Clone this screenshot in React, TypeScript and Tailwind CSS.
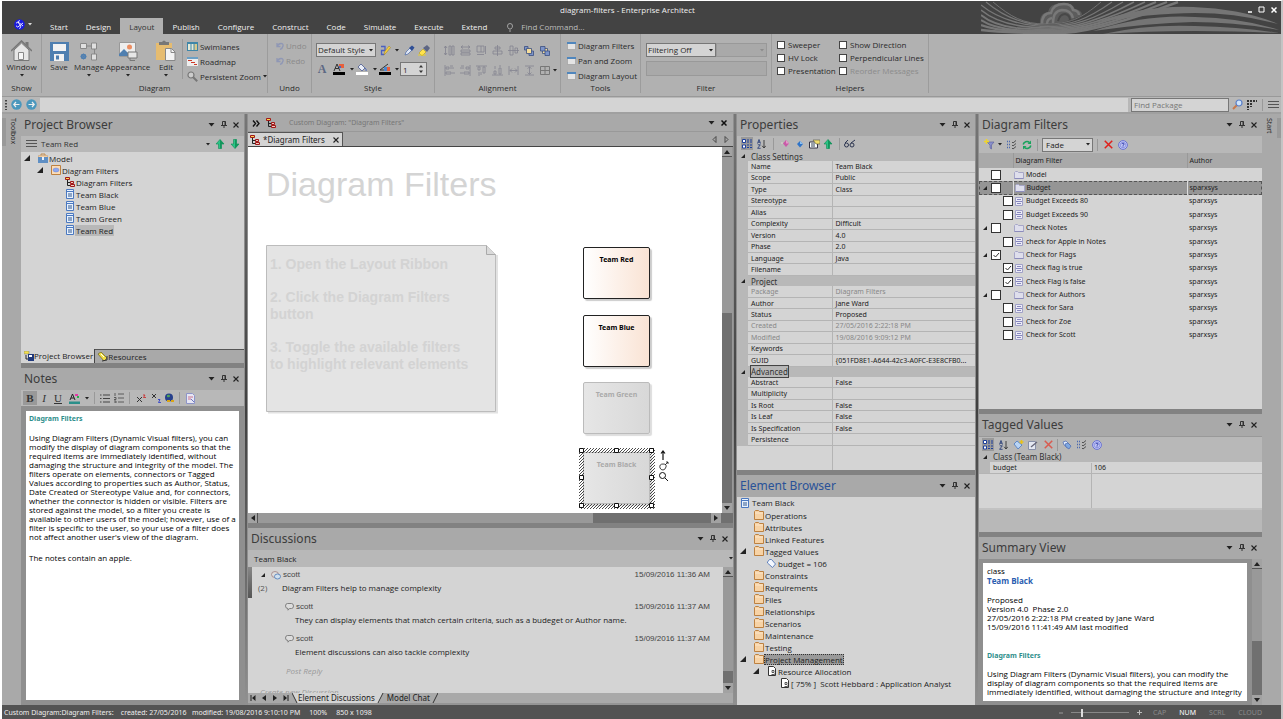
import React from "react";

type Kids = { children?: React.ReactNode };

/* ---------- small glyphs ---------- */

const Down = ({ c = "#222" }: { c?: string }) => (
  <svg width="4" height="3" viewBox="0 0 4 3" className="shrink-0"><path d="M0 0h4L2 2.500z" fill={c} /></svg>
);
const BigDown = () => (
  <svg width="7" height="4" viewBox="0 0 7 4"><path d="M.5 0h6l-3 3.500z" fill="#222" /></svg>
);
const Expand = ({ s = 5 }: { s?: number }) => (
  <svg width={s} height={s} viewBox="0 0 6 6" className="shrink-0"><path d="M6 0v6H0z" fill="#222" /></svg>
);
const Pin = () => (
  <svg width="6" height="8" viewBox="0 0 6 8" fill="none" stroke="#333"><path d="M1.500 .5h3v4h-3zM4 .5v4M0 4.500h6M3 5v2" /></svg>
);
const Cross = ({ s = 6, c = "#222", w = 1.1 }: { s?: number; c?: string; w?: number }) => (
  <svg width={s} height={s} viewBox="0 0 6 6" fill="none" stroke={c} strokeWidth={w}><path d="M.5 .5l5 5M5.500 .5l-5 5" /></svg>
);
const Tri = ({ d, c = "#222" }: { d: "u" | "d" | "l" | "r"; c?: string }) => {
  const p = { u: "M3 1l3 4H0z", d: "M0 1h6L3 5z", l: "M5 0v6L1 3z", r: "M1 0v6l4-3z" }[d];
  return <svg width="6" height="6" viewBox="0 0 6 6" className="shrink-0"><path d={p} fill={c} /></svg>;
};
const ArrowUpGreen = () => (
  <svg width="10" height="10" viewBox="0 0 10 10"><path d="M5 .5l4 4.500H6.500v4.500h-3V5H1z" fill="#2cc486" stroke="#0f8a54" strokeWidth=".6" /><path d="M5 .5l4 4.500H6.500v4.500H5z" fill="#12965c" /></svg>
);
const ArrowDownGreen = () => (
  <svg width="10" height="10" viewBox="0 0 10 10"><path d="M5 9.500L9 5H6.500V.5h-3V5H1z" fill="#2cc486" stroke="#0f8a54" strokeWidth=".6" /><path d="M5 9.500L9 5H6.500V.5H5z" fill="#12965c" /></svg>
);
const Menu = () => (
  <svg width="11" height="8" viewBox="0 0 11 8" stroke="#555"><path d="M0 .5h11M0 3.500h11M0 6.500h11" /></svg>
);
const DiagramIcon = () => (
  <svg width="10" height="10" viewBox="0 0 10 10" fill="none">
    <path d="M2.500 2v6.500H5M2.500 5.500H5" stroke="#222" />
    <path d="M.5 .5h4v2h-4z" fill="#ffd84a" stroke="#a01818" />
    <path d="M5.500 4.500h3v2h-3zM5.500 7.500h4v2h-4z" fill="#f3c9c0" stroke="#a01818" />
  </svg>
);
const ClassIcon = () => (
  <svg width="8" height="10" viewBox="0 0 8 10">
    <path d="M.5 .5h7v9h-7z" fill="#e8f2fd" stroke="#4a78c0" /><path d="M1 2.500h6" stroke="#4a78c0" />
    <path d="M2 5h4M2 7h4" stroke="#31568f" />
  </svg>
);
const Folder = () => (
  <svg width="10" height="10" viewBox="0 0 10 10"><path d="M.5 9.500v-8l1-1h3l1 1h4v8z" fill="#f7d3a6" stroke="#bd8140" /><path d="M1 3h8" stroke="#fbe6cb" /></svg>
);
const ModelIcon = () => (
  <svg width="10" height="10" viewBox="0 0 10 10"><path d="M3 2.500V1h4v1.500" stroke="#c08a4b" fill="none" /><path d="M.5 2.500h9v2h-9z" fill="#f3cda0" stroke="#c79a66" strokeWidth=".5" /><path d="M0 4h10v6H0z" fill="#5f8fc4" /><path d="M4 4h2v3H4z" fill="#e8f0fa" /></svg>
);
const PackageIcon = () => (
  <svg width="10" height="10" viewBox="0 0 10 10"><path d="M.5 .5h9v9h-9z" fill="#fbdcb8" stroke="#bd8140" /><ellipse cx="5" cy="5" rx="3" ry="2" fill="#8fa8ee" stroke="#6b87d8" strokeWidth=".5" /></svg>
);
const TagIcon = () => (
  <svg width="9" height="9" viewBox="0 0 9 9"><path d="M.5 3l2-2.500h2L8.500 5 5.500 8.500.5 4z" fill="#f4f8ff" stroke="#5478b8" strokeWidth=".9" /></svg>
);
const DocIcon = () => (
  <svg width="8" height="10" viewBox="0 0 8 10"><path d="M.5 .5h5l2 2v7h-7z" fill="#fff" stroke="#333" /><path d="M4 4.500h2v2H4zM3.500 8.500h3v-1" fill="none" stroke="#333" strokeWidth=".8" /></svg>
);
const LavFolder = () => (
  <svg width="10" height="8" viewBox="0 0 10 8"><path d="M.5 7.500v-6l1-1h2l1 1h5v6z" fill="#dedeec" stroke="#a6a6c8" /><path d="M.5 7.500h9" stroke="#8c8cbc" /></svg>
);
const FilterIcon = () => (
  <svg width="8" height="9" viewBox="0 0 8 9"><path d="M.5 .5h7v8h-7z" fill="#ececf6" stroke="#a0a0c8" /><path d="M2 2.500h4M2 6.500h4M1 4.500h6" stroke="#7c7cb8" strokeWidth=".9" /></svg>
);
const Categorized = () => (
  <svg width="10" height="10" viewBox="0 0 10 10" fill="none"><path d="M.5 .5h3v3h-3zM.5 6h3v3h-3z" fill="#fff" stroke="#1c3f9c" /><path d="M5 1h2M8 1h2M5 3h2M8 3h2M5 6h2M8 6h2M5 8.500h2M8 8.500h2" stroke="#1c3f9c" /></svg>
);
const SortAZ = () => (
  <svg width="9" height="10" viewBox="0 0 9 10" fill="none"><path d="M.5 4.500l1.500-4 1.500 4M1 3.200h2M.8 5.800h2.500l-2.700 3.500h3" stroke="#2a3f78" strokeWidth=".9" /><path d="M7 1v7.500M5.200 6.800L7 9l1.800-2.200" stroke="#333" strokeWidth=".9" /></svg>
);
const Help = () => (
  <svg width="10" height="10" viewBox="0 0 10 10" fill="none"><circle cx="5" cy="5" r="4.400" fill="#c4c9f6" stroke="#6a72d0" /><circle cx="5" cy="5" r="2.800" stroke="#7a82dc" strokeWidth=".7" /><path d="M3.900 4.200q0-1 1.100-1t1.100.9-1.100 1.100v.6M5 6.400v.8" stroke="#2f3aa8" strokeWidth=".9" /></svg>
);
const Checklist = () => (
  <svg width="10" height="10" viewBox="0 0 10 10" fill="none" stroke="#444"><path d="M0 1.500h3M0 4.500h3M0 7.500h3" stroke="#4a68b0" strokeWidth="1.500" strokeDasharray="1 1" /><path d="M5 2l1 1L9 .5M5 5l1 1 3-2.500M5 8l1 1 3-2.500" strokeWidth=".9" /></svg>
);
const Refresh = () => (
  <svg width="10" height="10" viewBox="0 0 10 10" fill="none" stroke="#18a35c" strokeWidth="1.600"><path d="M1.200 4.500A3.800 3.800 0 017.500 2.500M8.800 5.500A3.800 3.800 0 012.500 7.500" /><path d="M9 .5v3.500H5.500zM1 9.500V6h3.500z" fill="#18a35c" stroke="none" /></svg>
);
const RedX = ({ c = "#e0201b" }: { c?: string }) => <Cross s={9} c={c} w={1} />;

/* ---------- window chrome ---------- */

const IconBtn = ({ label, children, cls = "" }: Kids & { label: string; cls?: string }) => (
  <button aria-label={label} className={`flex h-3 shrink-0 items-center justify-center ${cls}`}>{children}</button>
);

function PanelHeader({ title, blue }: { title: string; blue?: boolean }) {
  return (
    <header className="flex h-[22px] shrink-0 items-center bg-[#a9a9a9] pl-[3px] pr-[2px]">
      <h2 className={`flex-1 font-['Noto_Sans',sans-serif] text-[12px] leading-5 ${blue ? "text-[#2a5298]" : "text-[#3c3c3c]"}`}>{title}</h2>
      <IconBtn label={`${title} menu`} cls="w-[13px]"><BigDown /></IconBtn>
      <IconBtn label={`Pin ${title}`} cls="w-3"><Pin /></IconBtn>
      <IconBtn label={`Close ${title}`} cls="w-3"><Cross /></IconBtn>
    </header>
  );
}

const HSplit = () => <div className="h-[5px] shrink-0 bg-[#828282]" />;
const VSplit = () => (
  <div className="flex w-1 shrink-0 justify-center bg-[#8f8f8f]">
    <div className="w-[2px] bg-linear-to-b from-[#777] via-[#404040] to-[#909090]" />
  </div>
);
const Sep = () => <div className="h-3 w-px shrink-0 bg-[#999]" />;

function VScroll({ thumb }: { thumb: string }) {
  return (
    <div className="flex w-[10px] shrink-0 flex-col bg-[#707070]">
      <IconBtn label="Scroll up" cls="h-[10px]! w-[10px] bg-[#a2a2a2] border-b border-[#555]"><Tri d="u" /></IconBtn>
      <div className={`bg-[#999] ${thumb}`} />
      <div className="flex-1" />
      <IconBtn label="Scroll down" cls="h-[10px]! w-[10px] bg-[#a2a2a2]"><Tri d="d" /></IconBtn>
    </div>
  );
}

function Check({ id, on }: { id: string; on?: boolean }) {
  return (
    <span className="relative inline-block h-[10px] w-[10px] shrink-0">
      <input id={id} aria-label={id} type="checkbox" defaultChecked={on} className="peer block h-[10px] w-[10px] appearance-none border border-[#333] bg-white" />
      <svg className="pointer-events-none absolute inset-0 hidden peer-checked:block" width="10" height="10" viewBox="0 0 10 10" fill="none" stroke="#333"><path d="M2.500 5l2 2 3.500-4" /></svg>
    </span>
  );
}

/* ---------- title bar ---------- */

const SWEEPS: [number, number][] = [[12, 1], [5, 1], [0, 4], [0, 9], [0, 14], [0, 19], [0, 24], [0, 29]];

function Waves() {
  return (
    <svg className="absolute right-0 top-0" width="300" height="33" viewBox="0 0 300 33" fill="none">
      <path d="M59 24q-1-12 8-13 1-8 13-9 11-1 14 6 6 1 7 5l-6 12z" fill="#5c5c5c" />
      <g stroke="#787878" strokeWidth="2.500">
        <path d="M61 23q0-11 9-11 2-9 13-9 8 0 9 6 6 1 6 5" />
        <path d="M72 22q0-12 9-13 9 0 11 8" />
        <path d="M66 23q0-5 5-6" />
      </g>
      <path d="M77 20q2-7 7-7 5 1 5 6" stroke="#484848" strokeWidth="2" />
      <path d="M12 1C30 20 48 23 65 23S100 18 120 1L300 33H0z" fill="#434343" />
      <g stroke="#777">
        {SWEEPS.map(([x, y], i) => (
          <path key={i} strokeWidth={0.9 + i * 0.22} d={`M${x} ${y}C${x + 18} ${Math.min(y + 15, 31)} ${42 + i * 2} ${23 + i * 1.4} ${65 + i * 2} ${23 + i * 1.3}S${100 + i * 6} ${18 + i * 0.5} ${120 + i * 11} 1`} />
        ))}
      </g>
      <path d="M112 33Q170 9 212 12 262 12 299 32v1z" fill="#434343" />
      <g fill="#757575">
        <path d="M112 22Q164 4 212 6 262 8 297 23 256 12 214 12 170 12 112 22z" />
        <path d="M112 30Q166 13 214 16 262 17 298 29 256 21 212 21 168 22 112 30z" />
        <path d="M122 33Q166 23 214 25 262 26 298 32q-40-2-84-2-50 0-92 3z" />
      </g>
    </svg>
  );
}

const TABS = ["Start", "Design", "Layout", "Publish", "Configure", "Construct", "Code", "Simulate", "Execute", "Extend"];

function TitleBar() {
  return (
    <header className="relative h-[33px] shrink-0 bg-[#434343] text-[#f0f0f0]">
      <Waves />
      <div className="relative flex h-[17px] items-center">
        <h1 className="flex-1 pr-7 text-center">diagram-filters - Enterprise Architect</h1>
        <div className="absolute right-1 flex gap-[5px]">
          <IconBtn label="Minimize" cls="w-[7px]"><svg width="6" height="7"><path d="M1 6h4" stroke="#fff" strokeWidth="1.500" /></svg></IconBtn>
          <IconBtn label="Maximize" cls="w-[7px]"><svg width="7" height="7"><path d="M1 1h5v5H1z" fill="none" stroke="#fff" /></svg></IconBtn>
          <IconBtn label="Close" cls="w-[7px]"><Cross c="#fff" w={1.5} /></IconBtn>
        </div>
      </div>
      <nav className="relative flex h-4 items-stretch">
        <button aria-label="Application menu" className="flex w-[39px] shrink-0 items-center gap-[3px] pb-[4px] pl-3">
          <svg width="11" height="11" viewBox="0 0 11 11" fill="none" className="shrink-0"><circle cx="5.500" cy="5.500" r="5.300" fill="#1a1ae0" /><path d="M2 4.200q2-2.400 3.500 0T9 4M2 6.800q1.500 2.400 3.500 0T9 7M5.500 1.200q-2.500 2 0 4.300t0 4.300" stroke="#fff" strokeWidth=".9" /></svg>
          <Down c="#ddd" />
        </button>
        {TABS.map((t) => (
          <button key={t} className={`px-[9px] pt-[2px] ${t === "Layout" ? "bg-[#b1b1b1] text-[#333]" : ""}`}>{t}</button>
        ))}
        <label className="ml-[11px] flex items-center gap-2 pt-[2px] text-[#ccc]">
          <svg width="6" height="9" viewBox="0 0 6 9" fill="none" stroke="#bbb" strokeWidth=".8"><path d="M2 6Q.5 4.500.5 3a2.500 2.500 0 015 0Q5.500 4.500 4 6zM2 8h2" /></svg>
          <input aria-label="Find Command" placeholder="Find Command..." className="w-24 bg-transparent placeholder:text-[#bdbdbd] outline-none" />
        </label>
      </nav>
    </header>
  );
}

/* ---------- ribbon ---------- */

function Group({ label, w, children }: Kids & { label: string; w: string }) {
  return (
    <section className={`flex shrink-0 flex-col border-r border-[#9c9c9c] ${w}`}>
      <div className="h-[49px]">{children}</div>
      <div className="text-center">{label}</div>
    </section>
  );
}

function BigBtn({ label, w, arrow = true, children }: Kids & { label: string; w: string; arrow?: boolean }) {
  return (
    <button className={`flex shrink-0 flex-col items-center ${w}`}>
      <span className="flex h-[22px] items-end">{children}</span>
      <span className="mt-px leading-[10px]">{label}</span>
      <span className="mt-[2px]">{arrow && <Down />}</span>
    </button>
  );
}

const WinGlyph = () => (
  <svg width="9" height="8" viewBox="0 0 9 8"><path d="M.5 .5h8v7h-8z" fill="#e4e4e4" stroke="#999" strokeWidth=".6" /><path d="M0 0h9v2H0z" fill="#4f86bd" /></svg>
);

const ALIGN: string[] = [
  "M1.500 1v9M0 3l1.500-2L3 3M0 8l1.500 2L3 8M5 1h2v9H5zM8 1h2v9H8z",
  "M1 2h9M3 .5L1 2l2 1.500M8 .5L10 2 8 3.500M1 5h9v2H1zM1 8h9v2H1z",
  "M1 1h7v6H1zM5 1v6M9.500 1v8M1 9.500h7",
  "M5.500 0v11M3 2h5v2H3zM1 6h9v3H1z",
  "M0 5.500h11M2 1h3v9H2zM7 3h2.500v5H7z",
];
const ALIGN2: string[] = [
  "M1 0v11M2 2h3v2H2zM6 1h3M6 3h4M2 7h5v2H2zM8 8h3",
  "M10 0v11M6 2h3v2H6zM1 1h3M0 3h4M4 7h5v2H4zM0 8h3",
  "M0 1h11M2 2h2v3H2zM7 2h2v6H7zM3 7v4M5 7v3",
  "M0 10h11M2 6h2v3H2zM7 3h2v6H7zM3 1v3M8 0v2",
  "M1 1v9M10 1v9M2 5.500h7M4 3.500L2 5.500l2 2M7 3.500l2 2-2 2",
  "M1 1h9M1 10h9M5.500 2v7M3.500 3.500L5.500 2l2 1.500M3.500 7.500l2 2 2-2",
];

function AlignIcon({ d }: { d: string }) {
  return (
    <button aria-label="Align" className="flex w-4 justify-center">
      <svg width="11" height="11" viewBox="0 0 11 11" fill="none" stroke="#83838f" strokeWidth=".8"><path d={d} /></svg>
    </button>
  );
}

function Sel({ label, value, w, cls = "" }: { label: string; value: string; w: string; cls?: string }) {
  return (
    <span className={`relative inline-flex items-center ${w}`}>
      <select aria-label={label} className={`h-[14px] w-full appearance-none border px-px leading-3 ${cls || "border-[#777] bg-[#d4d4d4]"}`}><option>{value}</option></select>
      <span className="pointer-events-none absolute right-[3px]"><Down c={value ? "#222" : "#8c8c8c"} /></span>
    </span>
  );
}

function HelperCheck({ label, off }: { label: string; off?: boolean }) {
  return (
    <div className="flex h-[13px] items-center gap-[3px]">
      <span className="relative inline-block h-2 w-2 shrink-0">
        <input id={label} type="checkbox" disabled={off} className="block h-2 w-2 appearance-none border border-[#444] bg-white" />
      </span>
      <label htmlFor={label} className={off ? "whitespace-nowrap text-[#8c8c8c]" : "whitespace-nowrap"}>{label}</label>
    </div>
  );
}

function Ribbon() {
  return (
    <div className="flex h-[63px] shrink-0 border-b border-[#999] bg-[#b1b1b1] pb-[3px] text-[#2a2a2a]">
      <Group label="Show" w="w-10">
        <div className="flex justify-center pt-[5px]">
          <BigBtn label="Window" w="w-9">
            <svg width="21" height="21" viewBox="0 0 21 21"><path d="M3 10v10.500h15V10L10.500 3z" fill="#e6e6e6" stroke="#777" /><path d="M14.500 2h3v5l-3-3z" fill="#777" /><path d="M0 11L10.500 1 21 11" fill="none" stroke="#777" strokeWidth="1.600" /><path d="M7.500 12.500h5v7h-5z" fill="#f6f6f6" stroke="#888" /></svg>
          </BigBtn>
        </div>
      </Group>
      <Group label="Diagram" w="w-[226px]">
        <div className="flex pl-[2px] pt-[5px]">
          <BigBtn label="Save" w="w-[30px]" arrow={false}>
            <svg width="19" height="20" viewBox="0 0 19 20"><path d="M0 1h19v19H0z" fill="#4f7fb0" /><path d="M3 3h13v7H3zM4 13h10v7H4z" fill="#f2f2f2" /><path d="M6 14.500h3v4H6z" fill="#4f7fb0" /></svg>
          </BigBtn>
          <BigBtn label="Manage" w="w-[30px]">
            <svg width="18" height="20" viewBox="0 0 18 20" fill="none"><path d="M.5 2.500h6v5h-6zM11.500 2h5v6h-5zM11.500 13h5v6h-5z" fill="#e0e0e0" stroke="#888" /><path d="M6.500 5h5M14.500 8v5" stroke="#888" /><circle cx="3.500" cy="15.500" r="2" stroke="#4f7fb0" strokeWidth="1.600" /><path d="M3.500 12.500v6M.5 15.500h6M1.500 13.500l4 4M5.500 13.500l-4 4" stroke="#4f7fb0" strokeWidth=".8" /></svg>
          </BigBtn>
          <BigBtn label="Appearance" w="w-[48px]">
            <svg width="20" height="20" viewBox="0 0 20 20"><path d="M1.500 1.500h16v14h-16z" fill="#eee" stroke="#999" /><circle cx="11.500" cy="6" r="2.500" fill="#ec8e62" /><path d="M1 13l5-5 4 4v3H1z" fill="#4f7fb0" /><path d="M10 11h9v6h-9z" fill="#e6e6e6" stroke="#777" /><path d="M12 17v2.500h5" stroke="#777" fill="none" /></svg>
          </BigBtn>
          <BigBtn label="Edit" w="w-[28px]">
            <svg width="20" height="21" viewBox="0 0 20 21"><path d="M0 3h16v17H0z" fill="#e6bc70" /><path d="M3 2h3q2-3 4 0h3v3H3z" fill="#777" /><path d="M9.500 8.500h6l3.500 3.500v8.500h-9.500z" fill="#f4f4f4" stroke="#888" /><path d="M15 8.500v4h4" fill="none" stroke="#888" /></svg>
          </BigBtn>
          <div className="mx-[2px] h-10 w-px bg-[#999]" />
          <div className="flex flex-col whitespace-nowrap pl-[2px]">
            <button className="flex h-[15px] items-center gap-[2px]"><svg width="11" height="9" viewBox="0 0 11 9"><path d="M0 0h11v9H0z" fill="#3f86a8" /><path d="M1 2h2.500v6H1zM4.500 2h2v6h-2z" fill="#e6ead8" /><path d="M7.500 2h2.500v6H7.500z" fill="#d8c98c" /></svg>Swimlanes</button>
            <button className="flex h-[15px] items-center gap-[2px]"><svg width="11" height="9" viewBox="0 0 11 9"><path d="M0 0h11v9H0z" fill="#eee" /><path d="M0 1h11" stroke="#3f86b8" strokeWidth="1.500" /><path d="M1 3.500h4M4 5.500h4M7 7.500h3" stroke="#cf3c2b" /></svg>Roadmap</button>
            <button className="flex h-[15px] items-center gap-[2px]"><svg width="11" height="11" viewBox="0 0 11 11" fill="none" stroke="#777"><circle cx="4" cy="4" r="3" fill="#ccc" strokeWidth="1.200" /><path d="M6.200 6.200l4 4" strokeWidth="2" /></svg>Persistent Zoom<Down /></button>
          </div>
        </div>
      </Group>
      <Group label="Undo" w="w-11">
        <div className="flex flex-col pl-2 pt-1 text-[#8a8a8a]">
          <button className="flex h-[15px] items-center gap-[2px]"><svg width="8" height="8" viewBox="0 0 8 8" fill="none" stroke="#8f97b5" strokeWidth="1.300"><path d="M1 1v3.500h3.500M1 4.500q1.500-3 4-3T7 4 4 7.500" /></svg>Undo</button>
          <button className="flex h-[15px] items-center gap-[2px]"><svg width="8" height="8" viewBox="0 0 8 8" fill="none" stroke="#8f97b5" strokeWidth="1.300"><path d="M1 1v3.500h3.500M1 4.500q1.500-3 4-3T7 4 4 7.500" /></svg>Redo</button>
        </div>
      </Group>
      <Group label="Style" w="w-[123px]">
        <div className="flex items-center pl-1 pt-[9px]">
          <Sel label="Style" value="Default Style" w="w-[60px]" />
          <IconBtn label="Save style" cls="ml-1 w-[11px]"><svg width="11" height="11" viewBox="0 0 11 11"><path d="M1 1.500h4v4H1.500v4H4" fill="none" stroke="#4a5fc0" strokeWidth="1.300" /><path d="M4 10l1-4 4-5 1.500 1.500-4 5z" fill="#f5cf3e" stroke="#9a7a20" strokeWidth=".5" /></svg></IconBtn>
          <span className="mx-1"><Down /></span>
          <IconBtn label="Pick style" cls="w-3"><svg width="11" height="11" viewBox="0 0 11 11"><path d="M1 10l1-3 4-4 2 2-4 4z" fill="#dfe7f7" stroke="#4a68a8" strokeWidth=".7" /><path d="M5 3l3-2.500 2.500 2L8 6z" fill="#2f4f96" /></svg></IconBtn>
          <IconBtn label="Apply style" cls="ml-[3px] w-3"><svg width="12" height="11" viewBox="0 0 12 11"><path d="M1 8l4-4 3 3-4 4z" fill="#ffe34d" stroke="#b49a22" strokeWidth=".6" /><path d="M5 3l4-3 3 3-3 4z" fill="#5d6684" /><path d="M0 10h8" stroke="#e8cf2c" /></svg></IconBtn>
        </div>
        <div className="flex items-center pl-1 pt-[5px]">
          <IconBtn label="Font" cls="w-3"><span className="font-['Liberation_Serif',serif] text-[12px] font-bold leading-3 text-[#5d6884]">A</span></IconBtn>
          <IconBtn label="Text colour" cls="ml-[5px] w-3"><svg width="12" height="12" viewBox="0 0 12 12"><path d="M1 8l3-7 3 7M2 5.500h4" stroke="#333" fill="none" /><path d="M6 1h5v4H6z" fill="#e8603c" /><path d="M6 3h2v2H6z" fill="#4a68c0" /><path d="M0 9h12v3H0z" fill="#000" /></svg></IconBtn>
          <span className="ml-[5px]"><Down /></span>
          <IconBtn label="Fill colour" cls="ml-[2px] w-3"><svg width="12" height="12" viewBox="0 0 12 12"><path d="M2 4l3-3 4 4-3 3z" fill="#e9edf7" stroke="#4a5a90" strokeWidth=".8" /><path d="M9 5q2 2 1 3" stroke="#4a68c0" fill="none" /><path d="M0 9h12v3H0z" fill="#fff" /></svg></IconBtn>
          <span className="ml-[5px]"><Down /></span>
          <IconBtn label="Line colour" cls="ml-[2px] w-3"><svg width="12" height="12" viewBox="0 0 12 12"><path d="M1 7l8-6M1 7h4" stroke="#333" /><path d="M5 4h3v4H5z" fill="#4a88d0" /><path d="M8 4h3v4H8z" fill="#e8603c" /><path d="M0 9h12v3H0z" fill="#000" /></svg></IconBtn>
          <span className="ml-1"><Down /></span>
          <span className="relative ml-px flex items-center">
            <input aria-label="Line width" defaultValue="1" className="h-[14px] w-[27px] border border-[#777] bg-[#d4d4d4] px-[2px] outline-none" />
            <span className="pointer-events-none absolute right-1 flex flex-col gap-[2px]"><svg width="4" height="3"><path d="M2 0l2 2.500H0z" fill="#333" /></svg><svg width="4" height="3"><path d="M2 3L4 .5H0z" fill="#333" /></svg></span>
          </span>
        </div>
      </Group>
      <Group label="Alignment" w="w-[126px]">
        <div className="flex pl-[6px] pt-[11px]">
          {ALIGN.map((d) => <AlignIcon key={d} d={d} />)}
          <IconBtn label="Bring to front" cls="w-4"><svg width="10" height="10" viewBox="0 0 10 10" stroke="#3b4f80" strokeWidth=".8"><path d="M5 5h4.500v4.500H5z" fill="#7d94c8" /><path d="M.5 .5H4V4H.5z" fill="#7d94c8" /><path d="M2.500 2.500h5v5h-5z" fill="#f6dd9a" /></svg></IconBtn>
          <IconBtn label="Send to back" cls="w-4"><svg width="10" height="10" viewBox="0 0 10 10" stroke="#3b4f80" strokeWidth=".8"><path d="M2.500 2.500h5v5h-5z" fill="#f6dd9a" /><path d="M5 5h4.500v4.500H5zM.5 .5H5V5H.5z" fill="#7d94c8" /></svg></IconBtn>
        </div>
        <div className="flex items-center pl-[6px] pt-[7px]">
          {ALIGN2.map((d) => <AlignIcon key={d} d={d} />)}
          <IconBtn label="Auto layout" cls="w-4"><svg width="10" height="9" viewBox="0 0 10 9" fill="none" stroke="#777"><path d="M.5 .5h9v8h-9zM5 .5v8M.5 4.500h9" /></svg></IconBtn>
          <Down />
        </div>
      </Group>
      <Group label="Tools" w="w-20">
        <div className="flex flex-col pl-[6px] pt-1">
          {["Diagram Filters", "Pan and Zoom", "Diagram Layout"].map((t) => (
            <button key={t} className="flex h-[15px] items-center gap-[2px] whitespace-nowrap"><WinGlyph />{t}</button>
          ))}
        </div>
      </Group>
      <Group label="Filter" w="w-[131px]">
        <div className="flex pl-[5px] pt-[9px]">
          <Sel label="Filtering" value="Filtering Off" w="w-[70px]" />
          <Sel label="Filter value" value="" w="w-[51px]" cls="border-[#999] bg-[#a9a9a9]" />
        </div>
        <div className="pl-[5px] pt-1"><input aria-label="Filter text" disabled className="block h-[15px] w-[121px] border border-[#999] bg-[#a9a9a9]" /></div>
      </Group>
      <Group label="Helpers" w="w-[157px]">
        <div className="grid grid-cols-[62px_auto] pl-[5px] pt-1">
          <HelperCheck label="Sweeper" /><HelperCheck label="Show Direction" />
          <HelperCheck label="HV Lock" /><HelperCheck label="Perpendicular Lines" />
          <HelperCheck label="Presentation" /><HelperCheck label="Reorder Messages" off />
        </div>
      </Group>
    </div>
  );
}

const NavCircle = ({ flip }: { flip?: boolean }) => (
  <svg width="11" height="11" viewBox="0 0 11 11" className={flip ? "rotate-180" : ""}><circle cx="5.500" cy="5.500" r="5.200" fill="#4a97bd" /><path d="M8.500 5.500H3M5 3L2.800 5.500 5 8" stroke="#eee" strokeWidth="1.200" fill="none" /></svg>
);

function AddressBar() {
  return (
    <div className="flex h-[17px] shrink-0 items-center border-b-2 border-[#a0a0a0] bg-[#b8b8b8]">
      <svg width="8" height="10" className="pl-[3px]"><path d="M1 0v10" stroke="#444" strokeWidth="2" strokeDasharray="1.500 1.500" /></svg>
      <IconBtn label="Back" cls="w-[13px]"><NavCircle /></IconBtn>
      <IconBtn label="Forward" cls="ml-[2px] w-[13px]"><NavCircle flip /></IconBtn>
      <div className="ml-[2px] h-[14px] flex-1 bg-[#d4d4d4]" />
      <input aria-label="Find Package" placeholder="Find Package" className="ml-[3px] h-[14px] w-[98px] border border-[#777] bg-[#d4d4d4] px-[2px] outline-none placeholder:text-[#777]" />
      <IconBtn label="Search" cls="ml-[2px] w-3"><svg width="11" height="11" viewBox="0 0 11 11"><path d="M5 6L1 10" stroke="#c9784a" strokeWidth="2" /><circle cx="7" cy="4" r="3" fill="#cfe4fb" stroke="#5a7fc8" strokeWidth="1.200" /></svg></IconBtn>
      <IconBtn label="Options" cls="ml-[3px] w-3"><svg width="10" height="10" viewBox="0 0 10 10" stroke="#333" strokeWidth="2"><path d="M0 1h10" strokeDasharray="2 1" /><path d="M1 3v7M4 3v4" strokeDasharray="2 1" /></svg></IconBtn>
      <span className="mx-[4px]"><Sep /></span>
      <IconBtn label="Menu" cls="mr-[2px] w-3"><Menu /></IconBtn>
    </div>
  );
}

/* ---------- left column ---------- */

function TreeRow({ icon, text, pad, open, sel }: { icon: React.ReactNode; text: string; pad: string; open?: boolean; sel?: string }) {
  return (
    <li className={`flex h-3 items-center ${pad}`}>
      <span className="mr-[6px] w-[7px]">{open && <Expand s={6} />}</span>
      <span className="flex w-[11px] justify-center">{icon}</span>
      <span className={`whitespace-nowrap px-px leading-[11px] ${sel ?? ""}`}>{text}</span>
    </li>
  );
}

function ProjectBrowser() {
  return (
    <>
      <PanelHeader title="Project Browser" />
      <div className="flex h-4 shrink-0 items-center bg-[#b8b8b8] pl-[5px] pr-1">
        <Menu /><span className="ml-1 flex-1 text-[#333]">Team Red</span><Down />
        <IconBtn label="Move up" cls="ml-[5px] w-[10px]"><ArrowUpGreen /></IconBtn>
        <IconBtn label="Move down" cls="ml-[5px] w-[10px]"><ArrowDownGreen /></IconBtn>
      </div>
      <ul className="h-[197px] shrink-0 bg-[#d4d4d4]">
        <TreeRow icon={<ModelIcon />} text="Model" pad="pl-[3px]" open />
        <TreeRow icon={<PackageIcon />} text="Diagram Filters" pad="pl-4" open />
        <TreeRow icon={<DiagramIcon />} text="Diagram Filters" pad="pl-[30px]" />
        {["Team Black", "Team Blue", "Team Green"].map((t) => <TreeRow key={t} icon={<ClassIcon />} text={t} pad="pl-[30px]" />)}
        <TreeRow icon={<ClassIcon />} text="Team Red" pad="pl-[30px]" sel="bg-[#b8b8b8]" />
      </ul>
      <div className="flex h-[14px] shrink-0 border-t border-[#555] bg-[#a9a9a9] text-[#222]">
        <button className="-mt-px flex items-center border-r border-[#444] bg-[#d4d4d4] pl-[3px] pr-px">
          <svg width="10" height="10" viewBox="0 0 10 10"><path d="M0 0h5v3H0z" fill="#f5e14a" stroke="#777" strokeWidth=".5" /><path d="M2 4v4h2" stroke="#222" fill="none" /><path d="M4 3h6v7H4z" fill="#223a7c" /><path d="M5 4h3v2H5z" fill="#fff" /></svg>Project Browser
        </button>
        <button className="flex items-center pl-[2px]">
          <svg width="11" height="10" viewBox="0 0 11 10"><path d="M1 2l3-2 6 6-3 3z" fill="#f3df45" stroke="#6b611a" strokeWidth=".7" /><path d="M5 9l5-1V4" stroke="#333" fill="none" /><path d="M4 2l3 3" stroke="#fff" /></svg>Resources
        </button>
      </div>
    </>
  );
}

function Notes() {
  return (
    <>
      <PanelHeader title="Notes" />
      <div className="flex h-4 shrink-0 items-center bg-[#b8b8b8] pl-[2px] text-[#333]">
        <IconBtn label="Bold" cls="h-[14px]! w-[14px] bg-[#999]"><b className="font-['Liberation_Serif',serif] text-[11px]">B</b></IconBtn>
        <IconBtn label="Italic" cls="w-[14px]"><i className="font-['Liberation_Serif',serif] text-[11px]">I</i></IconBtn>
        <IconBtn label="Underline" cls="w-[14px]"><u className="font-['Liberation_Serif',serif] text-[11px]">U</u></IconBtn>
        <IconBtn label="Text colour" cls="ml-[3px] w-3"><svg width="11" height="11" viewBox="0 0 11 11"><path d="M1 7l2.500-6L6 7M2 5h3" stroke="#222" fill="none" /><path d="M6 1h3v2H6z" fill="#e33aa8" /><path d="M8 3h2v2H8z" fill="#27b04a" /><path d="M0 8.500h11V11H0z" fill="#2a8f8a" /></svg></IconBtn>
        <span className="mx-[5px]"><Down /></span><Sep />
        <IconBtn label="Bullets" cls="ml-1 w-3"><svg width="10" height="9" stroke="#444"><path d="M3 1h7M3 4.500h7M3 8h7" /><path d="M0 1h1.500M0 4.500h1.500M0 8h1.500" /></svg></IconBtn>
        <IconBtn label="Numbering" cls="ml-[2px] w-3"><svg width="10" height="10" stroke="#444" fill="none"><path d="M4 1h6M4 5h6M4 9h6M1 0v3M0 4.500h2v2H0M0 8h2v2H0" strokeWidth=".8" /></svg></IconBtn>
        <span className="ml-1"><Sep /></span>
        <IconBtn label="Superscript" cls="ml-[5px] w-3"><svg width="9" height="9" fill="none"><path d="M0 3l5 5M5 3L0 8" stroke="#333" /><path d="M6 1h2L6.500 3.500H9" stroke="#c22" strokeWidth=".8" /></svg></IconBtn>
        <IconBtn label="Subscript" cls="ml-[3px] w-3"><svg width="9" height="9" fill="none"><path d="M0 0l4 4M4 0L0 4" stroke="#333" /><path d="M6 5.500h2L6.500 8.500H9" stroke="#23c" strokeWidth=".8" /></svg></IconBtn>
        <IconBtn label="Hyperlink" cls="ml-px w-3"><svg width="11" height="11" viewBox="0 0 11 11"><circle cx="5" cy="4.500" r="4" fill="#27408c" /><path d="M3 2q3-1 3 1t-3 1z" fill="#4fa35a" /><path d="M3 8h3m1 0h3" stroke="#d9a514" strokeWidth="2" /></svg></IconBtn>
        <span className="mx-1"><Sep /></span>
        <IconBtn label="Insert" cls="w-3"><svg width="9" height="11" viewBox="0 0 9 11"><path d="M.5 .5h6l2 2v8h-8z" fill="#e6e6f4" stroke="#8d94c8" /><path d="M2 4h5M2 6h3" stroke="#c9748e" /><path d="M5 6l3 3" stroke="#6a78c0" /></svg></IconBtn>
      </div>
      <div className="min-h-0 flex-1 bg-[#8f8f8f] p-[5px]">
        <article className="h-full overflow-hidden whitespace-nowrap bg-white pl-[3px] pt-[3px] leading-[9px] text-black">
          <h3 className="font-['Noto_Sans',sans-serif] text-[7px] font-bold text-[#2f8f8c]">Diagram Filters</h3>
          <p className="mt-[10px]">Using Diagram Filters (Dynamic Visual filters), you can<br />modify the display of diagram components so that the<br />required items are immediately identified, without<br />damaging the structure and integrity of the model. The<br />filters operate on elements, connectors or Tagged<br />Values according to properties such as Author, Status,<br />Date Created or Stereotype Value and, for connectors,<br />whether the connector is hidden or visible. Filters are<br />stored against the model, so a filter you create is<br />available to other users of the model; however, use of a<br />filter is specific to the user, so your use of a filter does<br />not affect another user's view of the diagram.</p>
          <p className="mt-[12px]">The notes contain an apple.</p>
        </article>
      </div>
    </>
  );
}

/* ---------- centre ---------- */

function Box({ label, pos, faded }: { label: string; pos: string; faded?: boolean }) {
  return (
    <div className={`absolute h-[52px] w-[67px] rounded-[2px] border pt-[7px] text-center font-bold ${pos} ${faded ? "border-[#bbb] bg-linear-to-r from-[#e6e6e6] to-[#d8d8d8] text-[#aaa] shadow-[2px_2px_1px_#ddd]" : "border-[#222] bg-linear-to-r from-white to-[#f9e3d4] text-black shadow-[2px_2px_1px_#ccc]"}`}>
      {label}
    </div>
  );
}

const HANDLES: [number, number][] = [[0, 0], [35, 0], [70, 0], [0, 27], [70, 27], [0, 55], [35, 55], [70, 55]];

function Canvas() {
  return (
    <div className="relative min-w-0 flex-1 overflow-hidden bg-white font-['Noto_Sans',sans-serif] text-[7px]">
      <h2 className="absolute left-[18px] top-[17px] whitespace-nowrap font-['Liberation_Sans',sans-serif] text-[34px] leading-[40px] text-[#d4d4d4]">Diagram Filters</h2>
      <div className="absolute left-[18px] top-[98px] h-[167px] w-[230px]">
        <svg width="232" height="169" viewBox="0 0 232 169" className="absolute inset-0"><path d="M2 167.500h229V10" stroke="#e2e2e2" strokeWidth="2" fill="none" /><path d="M.5 .5h220l9 9v157H.5z" fill="#e4e4e4" stroke="#bcbcbc" /><path d="M220.500 .5v9h9" fill="#dadada" stroke="#aaa" /></svg>
        <div className="relative whitespace-nowrap pl-[4px] pt-[11px] font-['Liberation_Sans',sans-serif] text-[14px] font-bold leading-[17px] text-[#d3d3d3]">
          <p>1. Open the Layout Ribbon</p>
          <p className="mt-4">2. Click the Diagram Filters<br />button</p>
          <p className="mt-4">3. Toggle the available filters<br />to highlight relevant elements</p>
        </div>
      </div>
      <Box label="Team Red" pos="left-[335px] top-[100px]" />
      <Box label="Team Blue" pos="left-[335px] top-[168px]" />
      <Box label="Team Green" pos="left-[335px] top-[235px]" faded />
      <Box label="Team Black" pos="left-[335px] top-[305px]" faded />
      <svg className="absolute left-[331px] top-[301px]" width="76" height="61" viewBox="0 0 76 61">
        <defs><pattern id="hatch" width="3" height="3" patternUnits="userSpaceOnUse"><path d="M0 3L3 0M-1 1L1-1M2 4L4 2" stroke="#111" strokeWidth=".75" /></pattern></defs>
        <path fillRule="evenodd" d="M0 0h76v61H0zM5 5v51h66V5z" fill="url(#hatch)" />
        {HANDLES.map(([x, y]) => <path key={`${x}-${y}`} d={`M${x + 0.5} ${y + 0.5}h4v4h-4z`} fill="#fff" stroke="#111" />)}
      </svg>
      <svg className="absolute left-[410px] top-[303px]" width="12" height="34" viewBox="0 0 12 34" fill="none" stroke="#111">
        <path d="M5 1v9M3 3.500L5 1l2 2.500" strokeWidth="1.200" /><path d="M2 18q-1-4 3-4t3 3-3 3-3-2M7 15l3-3m-2 0h2v2" strokeWidth=".8" /><circle cx="4.500" cy="25.500" r="3" /><path d="M7 28l3 3" />
      </svg>
    </div>
  );
}

const JumpTri = ({ right }: { right?: boolean }) => (
  <svg width="6" height="6" viewBox="0 0 6 6" className={right ? "rotate-180" : ""}><path d="M5.500 0v6L2 3zM.5 0h1v6h-1z" fill="#222" /></svg>
);

function Center() {
  return (
    <main className="flex min-w-0 flex-1 flex-col">
      <div className="flex h-[18px] shrink-0 items-center border-b border-[#999] bg-[#a9a9a9] pl-1 pr-[3px] pt-px text-[#777]">
        <svg width="8" height="7" fill="none" stroke="#111" strokeWidth="1.400"><path d="M1 .5l2.500 3L1 6.500M4.500 .5l2.500 3-2.500 3" /></svg>
        <span className="ml-[6px]"><DiagramIcon /></span>
        <span className="ml-[13px] flex-1 font-['Noto_Sans',sans-serif] text-[7px]">Custom Diagram: "Diagram Filters"</span>
        <IconBtn label="Diagram menu" cls="w-[13px]"><BigDown /></IconBtn>
        <IconBtn label="Close diagram" cls="w-3"><Cross w={1.5} c="#111" /></IconBtn>
      </div>
      <div className="flex h-[15px] shrink-0 border-b border-[#444] bg-[#a9a9a9] pr-1">
        <div className="flex items-center border-r border-t border-[#555] bg-[#d4d4d4] pl-[2px] pr-[3px] pt-px">
          <DiagramIcon /><span className="ml-[3px] mr-[8px] whitespace-nowrap font-['Noto_Sans',sans-serif]">*Diagram Filters</span><IconBtn label="Close tab"><Cross /></IconBtn>
        </div>
        <div className="flex flex-1 items-center justify-end gap-[5px]">
          <svg width="6" height="7" fill="none" stroke="#333" strokeWidth=".8"><path d="M4 .5v6l-3-3z" /></svg>
          <svg width="6" height="7" fill="none" stroke="#333" strokeWidth=".8"><path d="M2 .5v6l3-3z" /></svg>
        </div>
      </div>
      <div className="flex min-h-0 flex-1 border-r border-[#999]"><Canvas /><VScroll thumb="h-[156px]" /></div>
      <div className="flex h-[10px] shrink-0 bg-[#707070]">
        <IconBtn label="Scroll left" cls="h-[10px]! w-[10px] border-r border-[#555] bg-[#a2a2a2]"><Tri d="l" /></IconBtn>
        <div className="w-[335px] bg-[#999]" /><div className="flex-1" />
        <IconBtn label="Scroll right" cls="mr-3 h-[10px]! w-[10px] bg-[#a2a2a2]"><Tri d="r" /></IconBtn>
      </div>
      <HSplit />
      <PanelHeader title="Discussions" />
      <div className="flex h-[17px] shrink-0 items-center justify-between bg-[#b8b8b8] pl-[6px]"><span>Team Black</span><Down /></div>
      <div className="flex h-[126px] shrink-0 bg-[#d4d4d4]">
        <div className="h-[31px] w-1 bg-linear-to-b from-[#888] to-[#555]" />
        <div className="min-w-0 flex-1 overflow-hidden pl-2 pr-[13px]">
          <Post head={<><Expand s={4} /><svg width="10" height="9" viewBox="0 0 10 9" fill="#ddd" className="ml-[6px]"><ellipse cx="4" cy="3.500" rx="3.500" ry="3" stroke="#a08080" strokeWidth=".8" /><ellipse cx="6.500" cy="5.500" rx="3" ry="2.500" fill="#cfe0ef" stroke="#4a78b8" strokeWidth=".8" /></svg></>} time="15/09/2016 11:36 AM" count="(2)" text="Diagram Filters help to manage complexity" />
          <Post time="15/09/2016 11:37 AM" text="They can display elements that match certain criteria, such as a budeget or Author name." />
          <Post time="15/09/2016 11:37 AM" text="Element discussions can also tackle complexity" />
          <p className="pl-[26px] pt-[3px] italic text-[#999]">Post Reply</p>
          <p className="pt-[11px] italic text-[#999]">Create new Discussion</p>
        </div>
        <div className="flex w-[10px] shrink-0 flex-col bg-[#999]">
          <IconBtn label="Scroll up" cls="h-[10px]! border-b border-[#555] bg-[#a2a2a2]"><Tri d="u" /></IconBtn>
          <div className="flex-1" /><div className="h-3 bg-[#707070]" />
          <IconBtn label="Scroll down" cls="h-[10px]! bg-[#a2a2a2]"><Tri d="d" /></IconBtn>
        </div>
      </div>
      <div className="flex h-3 shrink-0 items-start border-b-2 border-[#959595] bg-[#a9a9a9] pl-[2px] font-['Noto_Sans',sans-serif]">
        <div className="mt-[2px] flex w-[42px] gap-[5px]"><JumpTri /><Tri d="l" /><Tri d="r" /><JumpTri right /></div>
        <svg width="6" height="10"><path d="M0 0h6v10H5z" fill="#d4d4d4" /><path d="M0 0l5 10" stroke="#333" /></svg>
        <button className="h-[10px] bg-[#d4d4d4]">Element Discussions</button>
        <svg width="10" height="10"><path d="M0 0h8L4 10H0z" fill="#d4d4d4" /><path d="M8 0L3 10" stroke="#333" /></svg>
        <button className="h-[10px] px-[2px]">Model Chat</button>
        <svg width="6" height="10"><path d="M6 0L1 10" stroke="#333" /></svg>
      </div>
    </main>
  );
}

function Post({ head, time, text, count }: { head?: React.ReactNode; time: string; text: string; count?: string }) {
  return (
    <article className="h-8">
      <div className={`flex h-4 items-center font-['Liberation_Sans',sans-serif] text-[8px] text-[#444] ${head ? "pl-px" : "pl-[25px]"}`}>
        {head ?? <svg width="9" height="8" viewBox="0 0 9 8" fill="#ddd" stroke="#777" strokeWidth=".9"><path d="M2.500 .5h4q2 0 2 2.500t-2 2.500h-2L3 7.200V5.500Q.5 5.500 .5 3t2-2.500z" /></svg>}
        <span className="ml-[2px] flex-1">scott</span><time>{time}</time>
      </div>
      <p className={`flex h-[10px] items-center whitespace-nowrap text-[#222] ${count ? "" : "pl-[35px]"}`}>{count && <span className="-ml-[2px] w-6 text-[#555]">{count}</span>}{text}</p>
    </article>
  );
}

/* ---------- properties column ---------- */

type Prop = [string, string, boolean?];
const PROPS: [string, Prop[]][] = [
  ["Class Settings", [["Name", "Team Black"], ["Scope", "Public"], ["Type", "Class"], ["Stereotype", ""], ["Alias", ""], ["Complexity", "Difficult"], ["Version", "4.0"], ["Phase", "2.0"], ["Language", "Java"], ["Filename", ""]]],
  ["Project", [["Package", "Diagram Filters", true], ["Author", "Jane Ward"], ["Status", "Proposed"], ["Created", "27/05/2016 2:22:18 PM", true], ["Modified", "19/08/2016 9:09:12 PM", true], ["Keywords", ""], ["GUID", "{051FD8E1-A644-42c3-A0FC-E3E8CFB0..."]]],
  ["Advanced", [["Abstract", "False"], ["Multiplicity", ""], ["Is Root", "False"], ["Is Leaf", "False"], ["Is Specification", "False"], ["Persistence", ""]]],
];

function Properties() {
  return (
    <>
      <PanelHeader title="Properties" />
      <div className="flex h-[15px] shrink-0 items-center bg-[#b8b8b8] pl-1">
        <IconBtn label="Categorized" cls="h-[13px]! w-3 bg-[#999]"><Categorized /></IconBtn>
        <IconBtn label="Alphabetical" cls="mx-[2px] w-3"><SortAZ /></IconBtn>
        <span className="mx-1"><Sep /></span>
        <IconBtn label="Add" cls="w-[15px]"><svg width="9" height="9"><path d="M5 1l3 3.500L5 8 2 4.500z" fill="#c95aa8" /><path d="M5 1l3 3.500H5z" fill="#e49acb" /><path d="M0 4h2" stroke="#ddc" /></svg></IconBtn>
        <IconBtn label="Attribute" cls="w-[14px]"><svg width="8" height="8"><path d="M4 1l3 3-3 3.500L1 4z" fill="#2f74c8" /><path d="M4 1l3 3H4z" fill="#8fc0ee" /></svg></IconBtn>
        <IconBtn label="Edit" cls="w-[14px]"><svg width="11" height="10"><path d="M.5 3h8v6h-8z" fill="#fff" stroke="#334" /><path d="M4 1h7v4H7z" fill="#f0dc6a" stroke="#554" strokeWidth=".6" /><path d="M2 5h4M2 7h4" stroke="#345" /></svg></IconBtn>
        <IconBtn label="Up" cls="w-[14px]"><ArrowUpGreen /></IconBtn>
        <span className="mx-1"><Sep /></span>
        <IconBtn label="View" cls="w-3"><svg width="12" height="9" fill="none" stroke="#2c3550"><circle cx="2.500" cy="6" r="2" /><circle cx="8" cy="6" r="2" /><path d="M1 4l3-3M7 4l4-3" /></svg></IconBtn>
      </div>
      <div className="flex h-[319px] shrink-0 flex-col">
        <table className="h-[295px] w-full table-fixed border-collapse font-['Noto_Sans',sans-serif] text-[7px]">
          <colgroup><col className="w-[11px]" /><col className="w-[84px]" /><col /></colgroup>
          <tbody>
            {PROPS.map(([g, rows]) => (
              <React.Fragment key={g}>
                <tr className="bg-[#b8b8b8] text-[#333]">
                  <td className="p-0 pl-1"><Expand s={4} /></td>
                  <th colSpan={2} className="p-0 pl-[3px] text-left font-['Noto_Sans',sans-serif] text-[8px] font-normal leading-[9px]"><span className={g === "Advanced" ? "outline outline-[#444]" : ""}>{g}</span></th>
                </tr>
                {rows.map(([k, v, dim]) => (
                  <tr key={k} className={dim ? "text-[#888]" : "text-[#222]"}>
                    <td className="bg-[#b8b8b8] p-0" />
                    <th className="border-b border-r border-[#b4b4b4] bg-[#d4d4d4] p-0 pl-[3px] text-left font-normal leading-[9px]">{k}</th>
                    <td className="overflow-hidden whitespace-nowrap border-b border-[#b4b4b4] bg-[#d4d4d4] p-0 pl-[3px] leading-[9px]">{v}</td>
                  </tr>
                ))}
              </React.Fragment>
            ))}
          </tbody>
        </table>
        <div className="flex flex-1 bg-[#d4d4d4]"><div className="w-24 border-r border-[#b4b4b4]" /></div>
      </div>
    </>
  );
}

const ELEMENTS = ["Operations", "Attributes", "Linked Features", "Tagged Values", "Constraints", "Requirements", "Files", "Relationships", "Scenarios", "Maintenance", "Testing", "Project Management"];

function ElementBrowser() {
  return (
    <>
      <PanelHeader title="Element Browser" blue />
      <ul className="min-h-0 flex-1 bg-[#d4d4d4] text-[#222]">
        <li className="flex h-3 items-center gap-[3px] pl-1"><ClassIcon />Team Black</li>
        {ELEMENTS.map((e) => (
          <React.Fragment key={e}>
            <TreeRow icon={<Folder />} text={e} pad="pl-[3px]" open={e === "Tagged Values" || e === "Project Management"} sel={e === "Project Management" ? "bg-[#999] outline-1 outline-dotted -outline-offset-1 outline-[#333]" : undefined} />
            {e === "Tagged Values" && <TreeRow icon={<TagIcon />} text="budget = 106" pad="pl-4" />}
          </React.Fragment>
        ))}
        <TreeRow icon={<DocIcon />} text="Resource Allocation" pad="pl-4" open />
        <TreeRow icon={<DocIcon />} text="[ 75% ]  Scott Hebbard : Application Analyst" pad="pl-[29px]" sel="whitespace-pre!" />
      </ul>
    </>
  );
}

/* ---------- right column ---------- */

const FILTERS: { t: string; level: number; open?: boolean; on?: boolean; author?: boolean }[] = [
  { t: "Model", level: 0, author: false },
  { t: "Budget", level: 0, open: true },
  { t: "Budget Exceeds 80", level: 1 },
  { t: "Budget Exceeds 90", level: 1 },
  { t: "Check Notes", level: 0, open: true },
  { t: "check for Apple in Notes", level: 1 },
  { t: "Check for Flags", level: 0, open: true, on: true },
  { t: "Check flag is true", level: 1, on: true },
  { t: "Check Flag is false", level: 1, on: true },
  { t: "Check for Authors", level: 0, open: true },
  { t: "Check for Sara", level: 1 },
  { t: "Check for Zoe", level: 1 },
  { t: "Check for Scott", level: 1 },
];

function DiagramFilters() {
  return (
    <>
      <PanelHeader title="Diagram Filters" />
      <div className="flex h-[17px] shrink-0 items-center bg-[#b8b8b8] pl-1">
        <IconBtn label="New filter" cls="w-3"><svg width="11" height="11" viewBox="0 0 11 11"><path d="M3 3h7L7.500 6v4L6 9V6z" fill="#8a90cc" stroke="#555a9a" strokeWidth=".6" /><path d="M2.500 0v5M0 2.500h5" stroke="#f0d52a" strokeWidth="1.600" /></svg></IconBtn>
        <span className="ml-[3px]"><Down /></span>
        <IconBtn label="Select filters" cls="ml-1 w-3"><Checklist /></IconBtn>
        <IconBtn label="Refresh" cls="ml-[3px] w-3"><Refresh /></IconBtn>
        <span className="mx-1"><Sep /></span>
        <Sel label="Filter effect" value="Fade" w="w-[51px]" cls="border-[#777] bg-[#d4d4d4] pl-[3px]!" />
        <span className="mx-1"><Sep /></span>
        <IconBtn label="Delete" cls="w-3"><RedX /></IconBtn>
        <IconBtn label="Help" cls="ml-[3px] w-3"><Help /></IconBtn>
      </div>
      <div className="h-[256px] shrink-0 bg-[#d4d4d4]">
        <table className="h-[189px] w-full table-fixed border-collapse font-['Noto_Sans',sans-serif] text-[7px] text-[#222]">
          <colgroup><col className="w-[34px]" /><col /><col className="w-[75px]" /></colgroup>
          <thead>
            <tr className="h-[15px] bg-[#a9a9a9]"><th className="p-0" /><th className="border-l border-[#999] p-0 pl-[2px] text-left font-normal">Diagram Filter</th><th className="border-l border-[#999] p-0 pl-[2px] text-left font-normal">Author</th></tr>
          </thead>
          <tbody>
            {FILTERS.map((f) => {
              const sel = f.t === "Budget";
              return (
                <tr key={f.t} className={sel ? "bg-[#959595] outline-1 outline-dashed -outline-offset-1 outline-[#555]" : ""}>
                  <td className="p-0">
                    <div className={`flex items-center ${f.level ? "pl-[24px]" : "pl-1"}`}>
                      {!f.level && <span className="mr-[3px] w-[5px]">{f.open && <Expand s={4} />}</span>}
                      <Check id={`Enable ${f.t}`} on={f.on} />
                    </div>
                  </td>
                  <td className={`p-0 ${sel ? "border-l border-[#ddd]" : ""}`}>
                    <div className="flex items-center pl-px"><span className="flex w-[10px] justify-center">{f.level ? <FilterIcon /> : <LavFolder />}</span><span className="ml-[2px] leading-[10px]">{f.t}</span></div>
                  </td>
                  <td className={`p-0 pl-[2px] leading-[10px] ${sel ? "border-l border-[#ddd]" : ""}`}>{f.author === false ? "" : "sparxsys"}</td>
                </tr>
              );
            })}
          </tbody>
        </table>
      </div>
    </>
  );
}

function TaggedValues() {
  return (
    <>
      <PanelHeader title="Tagged Values" />
      <div className="flex h-4 shrink-0 items-center gap-[3px] border-t border-[#999] bg-[#b8b8b8] pl-[3px]">
        <IconBtn label="Categorized" cls="h-[13px]! w-3 bg-[#999]"><Categorized /></IconBtn>
        <IconBtn label="Alphabetical" cls="w-3"><SortAZ /></IconBtn>
        <IconBtn label="New tag" cls="w-3"><svg width="11" height="10" viewBox="0 0 11 10"><path d="M1 4l3-3 5 4-4 4z" fill="#b9d4f4" stroke="#4a78c0" strokeWidth=".8" /><path d="M8.500 0v4M6.500 2h4" stroke="#e8c21a" strokeWidth="1.500" /></svg></IconBtn>
        <IconBtn label="Edit tag" cls="w-3"><svg width="10" height="10"><path d="M.5 1.500h7v8h-7z" fill="#e4e8f2" stroke="#8890a8" /><path d="M3 7l6-5" stroke="#667" strokeWidth="1.300" /></svg></IconBtn>
        <IconBtn label="Delete tag" cls="w-3"><RedX c="#d95b50" /></IconBtn>
        <Sep />
        <IconBtn label="Tags" cls="w-3"><svg width="10" height="10" viewBox="0 0 10 10" stroke="#4a68b0" strokeWidth=".7"><path d="M1 2l3-1 4 4-2 3-4-3z" fill="#dfeafc" /><path d="M3 4l3-1 3 3-2 3-3-2z" fill="#7fa8e0" /></svg></IconBtn>
        <IconBtn label="Options" cls="w-3"><Checklist /></IconBtn>
        <IconBtn label="Help" cls="w-3"><Help /></IconBtn>
      </div>
      <div className="flex h-[10px] shrink-0 items-center bg-[#b8b8b8] pl-1 text-[#333]"><Expand s={4} /><span className="ml-[6px] font-['Noto_Sans',sans-serif]">Class (Team Black)</span></div>
      <dl className="flex h-3 shrink-0 items-center border-b border-[#b4b4b4] bg-[#d4d4d4] font-['Noto_Sans',sans-serif] text-[7px]">
        <div className="h-full w-[11px] bg-[#b8b8b8]" /><dt className="w-[101px] pl-[3px]">budget</dt><dd className="border-l border-[#b4b4b4] pl-[2px]">106</dd>
      </dl>
      <div className="h-[34px] shrink-0 bg-[#d4d4d4]"><div className="h-full w-[113px] border-r border-[#b4b4b4]" /></div>
      <div className="h-6 shrink-0 border-t-2 border-[#c2c2c2] bg-[#b8b8b8]" />
    </>
  );
}

function Summary() {
  return (
    <>
      <PanelHeader title="Summary View" />
      <div className="flex min-h-0 flex-1 bg-[#8f8f8f]">
        <div className="min-w-0 flex-1 py-[4px] pl-1 pr-[5px]">
          <article className="h-full overflow-hidden whitespace-nowrap bg-white pl-1 pt-[3px] leading-[9px] text-black">
            <p>class</p>
            <h3 className="text-[8px] font-bold leading-[11px] text-[#2a5db0]">Team Black</h3>
            <p className="mt-[9px]">Proposed</p>
            <p className="whitespace-pre">Version 4.0  Phase 2.0</p>
            <p>27/05/2016 2:22:18 PM created by Jane Ward</p>
            <p>15/09/2016 11:41:49 AM last modified</p>
            <h3 className="mt-[20px] font-['Noto_Sans',sans-serif] text-[7px] font-bold text-[#2f8f8c]">Diagram Filters</h3>
            <p className="mt-[9px]">Using Diagram Filters (Dynamic Visual filters), you can modify the<br />display of diagram components so that the required items are<br />immediately identified, without damaging the structure and integrity</p>
          </article>
        </div>
        <VScroll thumb="h-[72px]" />
      </div>
    </>
  );
}

/* ---------- app ---------- */

export default function App() {
  return (
    <div className="flex h-screen min-h-[719px] flex-col overflow-hidden border-l-2 border-r-2 border-t border-white border-r-[#c4c4c4] bg-[#a9a9a9] font-['Open_Sans','Noto_Sans',sans-serif] text-[8px] leading-[10px] text-[#222]">
      <TitleBar />
      <Ribbon />
      <AddressBar />
      <div className="flex min-h-0 flex-1">
        <aside className="flex w-[19px] shrink-0 items-start pt-1">
          <div className="h-7 w-1 bg-[#999]" />
          <button className="ml-[2px] text-[7px] [writing-mode:vertical-rl]">Toolbox</button>
        </aside>
        <section className="flex w-[223px] shrink-0 flex-col"><ProjectBrowser /><HSplit /><Notes /></section>
        <VSplit />
        <Center />
        <VSplit />
        <section className="flex w-[238px] shrink-0 flex-col"><Properties /><HSplit /><ElementBrowser /></section>
        <VSplit />
        <section className="flex w-[283px] shrink-0 flex-col"><DiagramFilters /><HSplit /><TaggedValues /><HSplit /><Summary /></section>
        <aside className="flex w-[19px] shrink-0 items-start justify-between pt-1">
          <button className="ml-[2px] text-[7px] [writing-mode:vertical-rl]">Start</button>
          <div className="h-5 w-1 bg-[#999]" />
        </aside>
      </div>
      <footer className="flex h-[14px] shrink-0 items-center bg-[#535353] pl-[2px] pt-px font-['Noto_Sans',sans-serif] text-[7px] text-[#eee]">
        <span className="flex-1 whitespace-pre">Custom Diagram:Diagram Filters:    created: 27/05/2016   modified: 19/08/2016 9:10:10 PM     100%     850 x 1098</span>
        <span className="flex items-center gap-2 text-[#8a8a8a]">
          <button aria-label="Zoom out"><svg width="4" height="4"><path d="M0 2h4" stroke="#999" /></svg></button>
          <input aria-label="Zoom" type="range" defaultValue="18" className="h-2 w-[58px] appearance-none bg-[linear-gradient(#888,#888)] bg-[length:100%_1px] bg-center bg-no-repeat [&::-webkit-slider-thumb]:h-2 [&::-webkit-slider-thumb]:w-[2px] [&::-webkit-slider-thumb]:appearance-none [&::-webkit-slider-thumb]:bg-[#ddd]" />
          <button aria-label="Zoom in"><svg width="5" height="5"><path d="M0 2.500h5M2.500 0v5" stroke="#bbb" /></svg></button>
        </span>
        <span className="ml-[11px] flex gap-[13px] pr-[19px] text-[#8a8a8a]"><span>CAP</span><span className="text-white">NUM</span><span>SCRL</span><span>CLOUD</span></span>
      </footer>
    </div>
  );
}
